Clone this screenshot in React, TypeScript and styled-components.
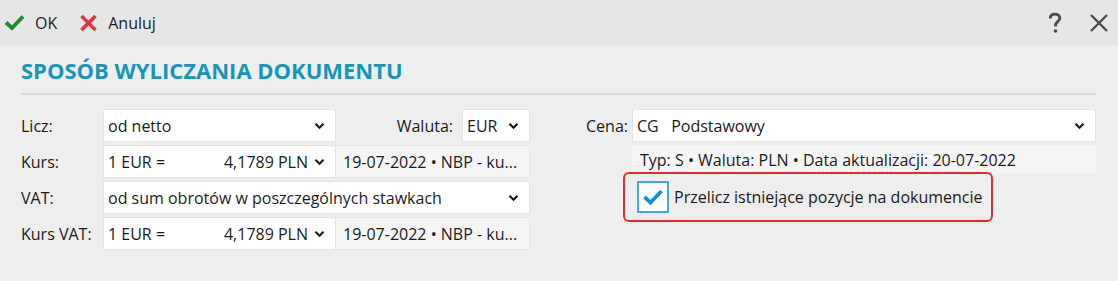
import React from "react";
import styled, { createGlobalStyle } from "styled-components";

const GlobalStyle = createGlobalStyle`
	html, body {
		margin: 0;
		padding: 0;
		background: #eeeeee;
	}
	body {
		font-family: "Open Sans", "Noto Sans", sans-serif;
		color: #1b1b1b;
	}
`;

const Window = styled.div`
	width: 1118px;
	height: 281px;
	background: #eeeeee;
	overflow: hidden;
`;

const Toolbar = styled.div`
	height: 45px;
	background: #e6e6e6;
	display: flex;
	align-items: center;
	padding: 0 4px;
`;

const ToolButton = styled.button`
	display: flex;
	align-items: center;
	gap: 10px;
	background: transparent;
	border: none;
	padding: 0;
	margin-right: 22px;
	font-family: inherit;
	font-size: 16px;
	color: #1b1b1b;
	cursor: pointer;
`;

const Spacer = styled.div`
	flex: 1;
`;

const IconButton = styled.button`
	width: 30px;
	height: 30px;
	display: flex;
	align-items: center;
	justify-content: center;
	background: transparent;
	border: none;
	padding: 0;
	margin-left: 14px;
	cursor: pointer;
`;

const Content = styled.div`
	padding: 10px 22px 0 21px;
`;

const Title = styled.h1`
	margin: 0;
	font-family: "Open Sans", sans-serif;
	font-weight: 700;
	font-size: 22px;
	line-height: 30px;
	color: #1597bd;
`;

const Divider = styled.div`
	height: 2px;
	background: #d9d9d9;
	margin: 8px 0 14px;
`;

const Columns = styled.div`
	display: flex;
	align-items: flex-start;
`;

const LeftForm = styled.div`
	width: 509px;
	display: grid;
	grid-template-columns: 82px 1fr;
	row-gap: 3px;
	align-items: center;
`;

const RightForm = styled.div`
	margin-left: 56px;
	width: 510px;
	display: grid;
	grid-template-columns: 46px 1fr;
	row-gap: 3px;
	align-items: center;
`;

const Label = styled.div`
	font-size: 16px;
	line-height: 22px;
	white-space: nowrap;
`;

const FieldRow = styled.div`
	display: flex;
	height: 33px;
`;

const Select = styled.div<{ $width?: number }>`
	${(p) => (p.$width ? `width: ${p.$width}px;` : "flex: 1;")}
	box-sizing: border-box;
	height: 33px;
	background: #ffffff;
	border: 1px solid #e4e4e4;
	display: flex;
	align-items: center;
	padding: 0 10px 0 4px;
	font-size: 16px;
	white-space: nowrap;
`;

const SelectText = styled.span`
	flex: 1;
	overflow: hidden;
`;

const RateLeft = styled.span`
	flex: 1;
`;

const RateRight = styled.span`
	margin-right: 6px;
`;

const Info = styled.div`
	flex: 1;
	box-sizing: border-box;
	height: 33px;
	background: #f5f5f5;
	border: 1px solid #e8e8e8;
	border-left: none;
	display: flex;
	align-items: center;
	padding: 0 4px 0 7px;
	font-size: 16px;
	white-space: nowrap;
	overflow: hidden;
`;

const InlineLabel = styled(Label)`
	flex: 1;
	text-align: right;
	align-self: center;
	padding-right: 9px;
`;

const PriceInfo = styled.div`
	box-sizing: border-box;
	height: 29px;
	background: #f5f5f5;
	display: flex;
	align-items: center;
	padding: 0 8px;
	font-size: 16px;
	white-space: nowrap;
`;

const Highlight = styled.div`
	grid-column: 1 / span 2;
	margin-left: 37px;
	margin-top: -5px;
	width: 370px;
	height: 50px;
	box-sizing: border-box;
	border: 2px solid #e42c2c;
	border-radius: 6px;
	display: flex;
	align-items: center;
	padding-left: 12px;
	gap: 5px;
	font-size: 16px;
	white-space: nowrap;
`;

const CheckBox = styled.div`
	width: 32px;
	height: 32px;
	box-sizing: border-box;
	border: 2px solid #3fa9e0;
	background: #ffffff;
	display: flex;
	align-items: center;
	justify-content: center;
	flex-shrink: 0;
`;

const Chevron = () => (
	<svg width="11" height="8" viewBox="0 0 11 8">
		<polyline points="1.5,1.8 5.5,5.8 9.5,1.8" fill="none" stroke="#1b1b1b" strokeWidth="2.2" />
	</svg>
);

const App = () => {
	return (
		<Window>
			<GlobalStyle />
			<Toolbar>
				<ToolButton>
					<svg width="21" height="17" viewBox="0 0 21 17">
						<polyline points="2,8.5 8,14 19,2.5" fill="none" stroke="#22872e" strokeWidth="3.8" />
					</svg>
					OK
				</ToolButton>
				<ToolButton>
					<svg width="19" height="18" viewBox="0 0 19 18">
						<path d="M2.5 2 L16.5 16 M16.5 2 L2.5 16" stroke="#e3333c" strokeWidth="3.6" />
					</svg>
					Anuluj
				</ToolButton>
				<Spacer />
				<IconButton>
					<svg width="16" height="22" viewBox="0 0 16 22">
						<path d="M3.2 6.5 C3.2 3.6 5.3 2.2 8 2.2 C10.9 2.2 12.8 3.9 12.8 6.3 C12.8 9.4 8.5 9.9 8.5 13.3 L8.5 14.5" fill="none" stroke="#4a4a4a" strokeWidth="2.8" />
						<circle cx="8.5" cy="19" r="1.8" fill="#4a4a4a" />
					</svg>
				</IconButton>
				<IconButton>
					<svg width="20" height="20" viewBox="0 0 20 20">
						<path d="M2 2 L18 18 M18 2 L2 18" stroke="#4a4a4a" strokeWidth="2.4" />
					</svg>
				</IconButton>
			</Toolbar>
			<Content>
				<Title>SPOSÓB WYLICZANIA DOKUMENTU</Title>
				<Divider />
				<Columns>
					<LeftForm>
						<Label>Licz:</Label>
						<FieldRow>
							<Select $width={233}>
								<SelectText>od netto</SelectText>
								<Chevron />
							</Select>
							<InlineLabel>Waluta:</InlineLabel>
							<Select $width={68}>
								<SelectText>EUR</SelectText>
								<Chevron />
							</Select>
						</FieldRow>

						<Label>Kurs:</Label>
						<FieldRow>
							<Select $width={233}>
								<RateLeft>1 EUR =</RateLeft>
								<RateRight>4,1789 PLN</RateRight>
								<Chevron />
							</Select>
							<Info>19-07-2022 • NBP - ku...</Info>
						</FieldRow>

						<Label>VAT:</Label>
						<FieldRow>
							<Select>
								<SelectText>od sum obrotów w poszczególnych stawkach</SelectText>
								<Chevron />
							</Select>
						</FieldRow>

						<Label>Kurs VAT:</Label>
						<FieldRow>
							<Select $width={233}>
								<RateLeft>1 EUR =</RateLeft>
								<RateRight>4,1789 PLN</RateRight>
								<Chevron />
							</Select>
							<Info>19-07-2022 • NBP - ku...</Info>
						</FieldRow>
					</LeftForm>

					<RightForm>
						<Label>Cena:</Label>
						<FieldRow>
							<Select>
								<SelectText>CG&nbsp;&nbsp;&nbsp;Podstawowy</SelectText>
								<Chevron />
							</Select>
						</FieldRow>
						<div />
						<PriceInfo>Typ: S • Waluta: PLN • Data aktualizacji: 20-07-2022</PriceInfo>
						<Highlight>
							<CheckBox>
								<svg width="22" height="18" viewBox="0 0 22 18">
									<polyline points="2.5,9 8.5,14.5 19.5,3" fill="none" stroke="#1b8fd3" strokeWidth="3.8" />
								</svg>
							</CheckBox>
							Przelicz istniejące pozycje na dokumencie
						</Highlight>
					</RightForm>
				</Columns>
			</Content>
		</Window>
	);
};

export default App;
